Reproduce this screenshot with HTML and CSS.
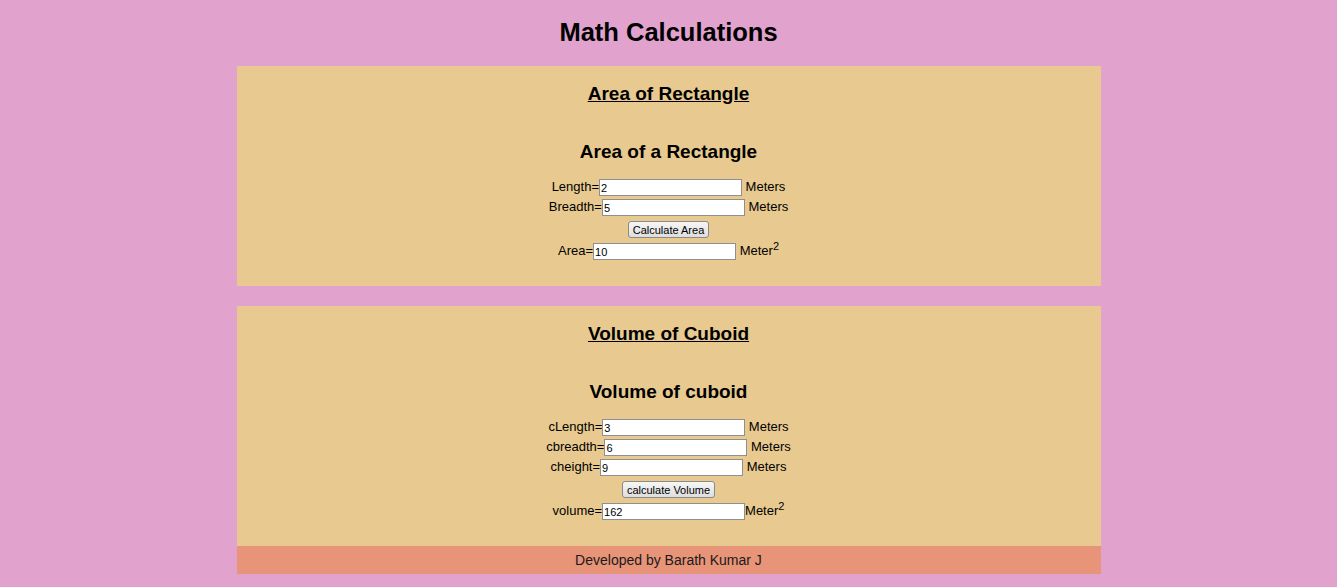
FILE: index.html
```html
<!DOCTYPE html>
<html>
<head>
<meta charset="utf-8">
<title>Math Calculations</title>
<link rel="stylesheet" href="styles.css">
</head>
<body>
<h1 class="title">Math Calculations</h1>
<main class="wrap">
  <section class="card">
    <h2 class="card-head">Area of Rectangle</h2>
    <h3 class="card-sub">Area of a Rectangle</h3>
    <div class="row">Length=<input class="field" type="text" value="2"> Meters</div>
    <div class="row">Breadth=<input class="field" type="text" value="5"> Meters</div>
    <div class="row btn-row"><button class="btn">Calculate Area</button></div>
    <div class="row">Area=<input class="field" type="text" value="10"> Meter<sup class="sq">2</sup></div>
  </section>
  <section class="card card-gap">
    <h2 class="card-head">Volume of Cuboid</h2>
    <h3 class="card-sub">Volume of cuboid</h3>
    <div class="row">cLength=<input class="field" type="text" value="3"> Meters</div>
    <div class="row">cbreadth=<input class="field" type="text" value="6"> Meters</div>
    <div class="row">cheight=<input class="field" type="text" value="9"> Meters</div>
    <div class="row btn-row"><button class="btn">calculate Volume</button></div>
    <div class="row">volume=<input class="field" type="text" value="162">Meter<sup class="sq">2</sup></div>
  </section>
  <footer class="foot">Developed by Barath Kumar J</footer>
</main>
</body>
</html>
```
FILE: styles.css
```css
html, body {
  margin: 0;
  padding: 0;
}
body {
  background: #e1a2ce;
  font-family: "Liberation Sans", Arial, sans-serif;
  font-size: 13px;
  color: #000;
}
.title {
  margin: 17px 0 19px;
  font-size: 25.5px;
  line-height: 30px;
  font-weight: bold;
  text-align: center;
}
.wrap {
  width: 864px;
  margin: 0 auto;
}
.card {
  background: #e8ca90;
  text-align: center;
  padding: 17px 0 25px;
}
.card-gap {
  margin-top: 20px;
}
.card-head {
  margin: 0;
  font-size: 19px;
  line-height: 22px;
  font-weight: bold;
  text-decoration: underline;
}
.card-sub {
  margin: 36px 0 14px;
  font-size: 19px;
  line-height: 22px;
  font-weight: bold;
}
.row {
  height: 20px;
  line-height: 20px;
  white-space: nowrap;
}
.btn-row {
  height: 24px;
  line-height: 24px;
}
.field {
  box-sizing: border-box;
  width: 143px;
  height: 17px;
  margin: 0;
  padding: 0 1px;
  border: 1px solid #8f8f8f;
  background: #fff;
  font-family: "Liberation Sans", Arial, sans-serif;
  font-size: 11px;
  color: #000;
  vertical-align: middle;
}
.btn {
  box-sizing: border-box;
  height: 17px;
  margin: 0;
  padding: 0 4px;
  border: 1px solid #8a8a8a;
  border-radius: 3px;
  background: linear-gradient(#f6f6f6, #dedede);
  font-family: "Liberation Sans", Arial, sans-serif;
  font-size: 11px;
  line-height: 14px;
  color: #000;
  vertical-align: middle;
}
.sq {
  font-size: 11px;
  line-height: 0;
  vertical-align: 5px;
}
.foot {
  background: #e89478;
  height: 28px;
  line-height: 28px;
  text-align: center;
  font-size: 14px;
  color: #1a1a1a;
}
```
